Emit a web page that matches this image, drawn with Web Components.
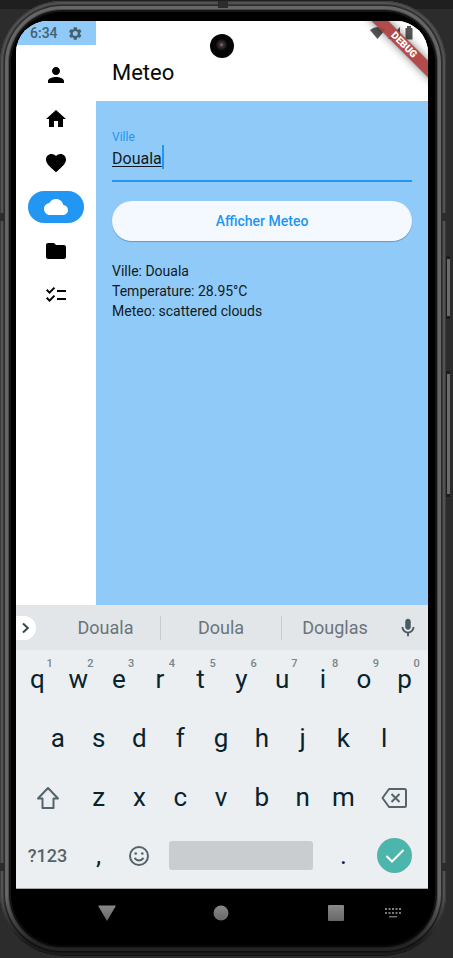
<!DOCTYPE html>
<html lang="fr">
<head>
<meta charset="utf-8">
<meta name="viewport" content="width=device-width, initial-scale=1">
<title>Meteo</title>
<style>
html{background:linear-gradient(#1f1f1f 0 9px,#2c2c2c 9px)}
body{margin:0;min-height:100vh;font-family:Roboto,"Liberation Sans",sans-serif;display:flow-root}
</style>
</head>
<body>
<phone-shell>
  <meteo-app>
    <side-rail slot="rail">
      <rail-item name="person" label="Profil"></rail-item>
      <rail-item name="home" label="Accueil"></rail-item>
      <rail-item name="heart" label="Favoris"></rail-item>
      <rail-item name="cloud" label="Meteo" selected></rail-item>
      <rail-item name="folder" label="Dossiers"></rail-item>
      <rail-item name="checklist" label="Liste"></rail-item>
    </side-rail>
    <span slot="title">Meteo</span>
    <meteo-form city="Douala" temperature="28.95°C" sky="scattered clouds"></meteo-form>
  </meteo-app>
  <suggestion-bar words="Douala,Doula,Douglas"></suggestion-bar>
  <soft-keyboard></soft-keyboard>
  <system-nav></system-nav>
</phone-shell>

<script>
const RESET = `<style>
*{box-sizing:border-box}
button,input{font:inherit;color:inherit;background:none;border:0;padding:0;margin:0;border-radius:0;outline:0}
button{display:grid;place-items:center;cursor:pointer}
svg{display:block}
</style>`;

function define(name, render) {
  customElements.define(name, class extends HTMLElement {
    connectedCallback() {
      if (this.shadowRoot) return;
      this.attachShadow({ mode: 'open' }).innerHTML = RESET + render(this);
    }
  });
}

define('phone-shell', () => `<style>
:host{position:relative;display:flex;flex-direction:column;box-sizing:border-box;min-height:calc(100vh - 3px);margin:1px 7px 2px 0;padding:20px 18px;border-radius:62px;background:#000;
 box-shadow:inset 0 0 0 1px #3d3d3d,inset 0 0 0 3px #525252,inset 0 0 0 4px #3a3a3a,inset 0 0 0 5px #2a2a2a,inset 0 0 0 8px #666,inset 0 0 0 9px #4a4a4a,inset 0 0 0 11px #141414}
:host{padding-left:16px}
.shade{position:absolute;inset:0;border-radius:62px;background:linear-gradient(transparent calc(100% - 60px),rgba(0,0,0,.65) calc(100% - 12px));pointer-events:none}
.screen{flex:1;display:flex;flex-direction:column;position:relative;overflow:hidden;border-radius:32px 32px 48px 48px;background:#000}
.camera{position:absolute;z-index:3;top:13px;left:50%;width:24px;height:24px;margin-left:-12px;border-radius:50%;background:radial-gradient(circle at 48% 45%,#716157 0 1px,#3a3432 2px,#241f24 4px,#050505 6px)}
.side{position:absolute;left:100%;width:4px;border:solid #1c1c1c;border-width:3px 0 3px 1px;background:#6a6a6a}
.power{top:255px;height:63px}.volume{top:370px;height:126px}
.band{position:absolute;background:#2c2c2c}
.b1,.b2{left:0;width:4px;height:8px}.b3,.b4{right:0;width:5px;height:8px}
.b1,.b3{top:212px}.b2,.b4{bottom:85px}.b5{top:0;left:218px;width:10px;height:7px}
</style>
<div class="screen"><div class="camera"></div><slot></slot></div>
<i class="side power"></i><i class="side volume"></i>
<i class="band b1"></i><i class="band b2"></i><i class="band b3"></i><i class="band b4"></i><i class="band b5"></i>
<i class="shade"></i>`);

define('meteo-app', () => `<style>
:host{position:relative;flex:1;display:grid;grid-template-columns:80px 1fr;background:#fff;overflow:hidden}
status-bar{position:absolute;z-index:1;inset:0 0 auto 0}
main{display:flex;flex-direction:column;background:#90caf9}
header{height:80px;padding:24px 16px 0;background:#fff;display:flex;align-items:center}
h1{margin:0;font-size:22px;line-height:28px;font-weight:400;color:#080808}
.debug{position:absolute;z-index:2;top:18px;right:-21px;width:90px;height:12px;transform:rotate(45deg);background:rgba(172,62,62,.93);box-shadow:0 0 8px rgba(0,0,0,.5);color:#fff;font-size:10px;line-height:12px;font-weight:900;text-align:center}
</style>
<status-bar></status-bar>
<slot name="rail"></slot>
<main><header><h1><slot name="title"></slot></h1></header><slot></slot></main>
<div class="debug">DEBUG</div>`);

define('status-bar', () => `<style>
:host{display:flex;align-items:center;height:24px;padding:0 14px;color:#45606f;font-size:14px;font-weight:500}
.gear{margin-left:10px}.space{flex:1}.right{display:flex;align-items:center;gap:3px;color:#555}
</style>
<span>6:34</span>
<svg class="gear" width="15" height="15" viewBox="0 0 24 24" fill="currentColor"><path d="M19.1 13c0-.3.1-.6.1-1s0-.7-.1-1l2.1-1.6c.2-.2.2-.4.1-.7l-2-3.4c-.1-.2-.4-.3-.6-.2l-2.5 1c-.5-.4-1.1-.7-1.7-1L14.100 2.400c0-.2-.2-.4-.5-.4h-4c-.2 0-.4.2-.5.400L8.700 5.100c-.6.3-1.200.6-1.700 1l-2.500-1c-.2-.1-.5 0-.6.200l-2 3.400c-.1.2-.1.5.1.7L4.100 11c0 .3-.1.7-.1 1s0 .7.1 1L2 14.600c-.2.2-.2.4-.1.700l2 3.400c.1.2.4.3.6.2l2.500-1c.5.4 1.100.7 1.700 1l.4 2.700c0 .2.2.4.5.4h4c.2 0 .4-.2.5-.4l.4-2.700c.6-.3 1.200-.6 1.700-1l2.500 1c.2.1.5 0 .6-.2l2-3.400c.1-.2.1-.5-.1-.7zM11.600 16a4 4 0 1 1 0-8 4 4 0 0 1 0 8z" fill-rule="evenodd"/></svg>
<span class="space"></span>
<span class="right">
<svg width="15" height="12" viewBox="0 0 15 12" fill="currentColor"><path d="M0 3Q7.500-3 15 3L7.500 12z"/></svg>
<svg width="13" height="12" viewBox="0 0 13 12" fill="currentColor"><path d="M0 12 12 0V12z"/></svg>
<svg width="10" height="14" viewBox="1 0 10 14" fill="currentColor"><path d="M4 0h4v2h1.500v11.500h-7V2H4z"/></svg>
</span>`);

define('side-rail', () => `<style>
:host{display:block;background:linear-gradient(#90caf9 0 24px,#fff 24px)}
nav{display:flex;flex-direction:column;align-items:center;gap:12px;padding:38px 0 16px}
</style><nav><slot></slot></nav>`);

const RAIL_ICONS = {
  person: 'M12 12c2.210 0 4-1.790 4-4s-1.790-4-4-4-4 1.790-4 4 1.790 4 4 4zm0 2c-2.670 0-8 1.340-8 4v2h16v-2c0-2.660-5.330-4-8-4z',
  home: 'M10 20v-6h4v6h5v-8h3L12 3 2 12h3v8z',
  heart: 'M12 21.350l-1.450-1.320C5.400 15.360 2 12.280 2 8.500 2 5.420 4.420 3 7.500 3c1.740 0 3.410.81 4.500 2.090C13.090 3.810 14.760 3 16.500 3 19.580 3 22 5.420 22 8.500c0 3.780-3.400 6.860-8.550 11.540z',
  cloud: 'M19.350 10.040C18.670 6.590 15.640 4 12 4 9.110 4 6.600 5.640 5.350 8.040 2.340 8.360 0 10.910 0 14c0 3.310 2.690 6 6 6h13c2.760 0 5-2.240 5-5 0-2.640-2.050-4.780-4.650-4.960z',
  folder: 'M10 4H4c-1.100 0-2 .9-2 2v12c0 1.100.9 2 2 2h16c1.100 0 2-.9 2-2V8c0-1.100-.9-2-2-2h-8z',
  checklist: 'M22 7h-9v2h9V7zm0 8h-9v2h9v-2zM5.540 11 2 7.460l1.410-1.410 2.120 2.120 4.240-4.240 1.410 1.410zM5.540 19 2 15.460l1.410-1.410 2.120 2.120 4.240-4.240 1.410 1.410z'
};
define('rail-item', el => `<style>
:host{display:block;color:#000}
:host([selected]){color:#fff}
button{width:56px;height:32px;border-radius:16px}
:host([selected]) button{background:#2196f3}
</style><button type="button" aria-label="${el.getAttribute('label')}"><svg width="24" height="24" viewBox="0 0 24 24" fill="currentColor"><path d="${RAIL_ICONS[el.getAttribute('name')]}"/></svg></button>`);

define('meteo-form', el => `<style>
:host{display:block;padding:28px 16px 16px;color:#121a20}
form{display:flex;flex-direction:column}
label{font-size:12px;line-height:16px;color:#2196f3}
.field{display:flex;height:37px;border-bottom:2px solid #2196f3;margin-bottom:19px}
input{height:26px;field-sizing:content;min-width:8px;font-size:16px;text-decoration:underline;text-decoration-thickness:1px;text-underline-offset:2px}
.caret{width:2px;height:24px;background:#2196f3}
button{height:40px;border-radius:20px;background:#f4f9ff;color:#2196f3;font-size:14px;font-weight:500;box-shadow:0 1px 1px rgba(0,0,0,.25)}
p{margin:0;font-size:14px;line-height:20px}
output{display:block;margin-top:20px}
</style>
<form onsubmit="return false">
<label for="city">Ville</label>
<div class="field"><input id="city" size="5" value="${el.getAttribute('city')}" spellcheck="false" autocomplete="off"><i class="caret"></i></div>
<button type="submit">Afficher Meteo</button>
<output for="city"><p>Ville: ${el.getAttribute('city')}</p><p>Temperature: ${el.getAttribute('temperature')}</p><p>Meteo: ${el.getAttribute('sky')}</p></output>
</form>`);

define('suggestion-bar', el => `<style>
:host{display:grid;grid-template-columns:35fr 109fr 121fr 107fr 40fr;align-items:center;height:45px;background:#e2e6e9;color:#6a757b;font-size:18px}
button{height:24px}
.word+.word{border-left:1px solid #c6cbce}
.more{width:20px;background:#fff;border-radius:0 12px 12px 0;color:#37474f}
.mic{color:#4b5b63}
</style>
<button class="more" type="button" aria-label="Plus"><svg width="20" height="20" viewBox="0 0 20 20" fill="none" stroke="currentColor" stroke-width="2"><path d="M7 5.500 11.800 10 7 14.500"/></svg></button>
${el.getAttribute('words').split(',').map(w => `<button class="word" type="button">${w}</button>`).join('')}
<button class="mic" type="button" aria-label="Micro"><svg width="22" height="22" viewBox="0 0 24 24" fill="currentColor"><path d="M12 14c1.700 0 3-1.300 3-3V5c0-1.700-1.300-3-3-3S9 3.300 9 5v6c0 1.700 1.300 3 3 3zm5-3c0 2.800-2.200 5-5 5s-5-2.200-5-5H5c0 3.500 2.600 6.400 6 6.900V21h2v-3.100c3.400-.5 6-3.400 6-6.900z"/></svg></button>`);

define('key-cap', el => `<style>
:host{display:grid;grid-column:span 2;position:relative;font-size:26px;color:#07232d}
:host([wide]){grid-column:span 3}
:host([first]){grid-column:2/span 2}
:host([space]){grid-column:span 8}
:host([small]){font-size:18px;color:#55646c;font-weight:500}
:host([icon]){color:#55646c}
button{padding-bottom:2px}
:host([icon]) button,:host([small]) button{padding:0}
sup{position:absolute;top:8px;left:calc(50% + 9px);font-size:11px;line-height:12px;font-weight:500;color:#7a858b}
</style><button type="button"${el.getAttribute('label') ? ` aria-label="${el.getAttribute('label')}"` : ''}><slot></slot></button>${el.getAttribute('hint') ? `<sup>${el.getAttribute('hint')}</sup>` : ''}`);

const caps = s => [...s].map(c => `<key-cap>${c}</key-cap>`).join('');
define('soft-keyboard', () => `<style>
:host{display:block;padding:0 3px 4px 1px;background:#ebeff2;border-bottom:1px solid #a5a8aa}
.row{display:grid;grid-template-columns:repeat(20,1fr);grid-auto-rows:59px}
.row:last-child{grid-auto-rows:57px}
.spacebar{width:144px;height:29px;border-radius:3px;background:#c9cdd0}
.enter{background:#4db6ac;border-radius:50%}
</style>
<div class="row">${[...'qwertyuiop'].map((c, i) => `<key-cap hint="${(i + 1) % 10}">${c}</key-cap>`).join('')}</div>
<div class="row"><key-cap first>a</key-cap>${caps('sdfghjkl')}</div>
<div class="row"><key-cap wide icon label="Majuscule"><svg width="24" height="24" viewBox="0 0 24 24" fill="none" stroke="currentColor" stroke-width="2" stroke-linejoin="round"><path d="M12 2 2 12.500H6.500V22H17.500V12.500H22z"/></svg></key-cap>${caps('zxcvbnm')}<key-cap wide icon label="Effacer"><svg width="26" height="22" viewBox="0 0 26 22" fill="none" stroke="currentColor" stroke-width="2" stroke-linejoin="round"><path d="M8 2H23.500Q25 2 25 3.500V18.500Q25 20 23.500 20H8L1.500 11z"/><path d="m10.500 7 8 8m0-8-8 8"/></svg></key-cap></div>
<div class="row"><key-cap wide small>?123</key-cap><key-cap>,</key-cap><key-cap icon label="Emoji"><svg width="22" height="22" viewBox="0 0 22 22" fill="none" stroke="currentColor" stroke-width="2"><circle cx="11" cy="11" r="9"/><path d="M6.500 13Q11 18 15.500 13"/><circle cx="7.700" cy="8.500" r="1.300" fill="currentColor" stroke="none"/><circle cx="14.300" cy="8.500" r="1.300" fill="currentColor" stroke="none"/></svg></key-cap><key-cap space icon label="Espace"><div class="spacebar"></div></key-cap><key-cap>.</key-cap><key-cap wide icon label="Valider"><svg class="enter" width="35" height="35" viewBox="0 0 35 35" fill="none" stroke="#fff" stroke-width="2"><path d="m9.500 18 5.500 5.500L26.500 12"/></svg></key-cap></div>`);

define('system-nav', () => `<style>
:host{display:grid;grid-template-columns:34fr 114fr 114fr 29fr 57fr 58fr 6fr;height:47px;background:#000;color:#9c9c9c}
.back{grid-column:2}.recent{grid-column:5}
</style>
<button class="back" type="button" aria-label="Retour"><svg width="18" height="16" viewBox="0 0 18 16" fill="currentColor"><path d="M1 .5H17Q18 .5 17.500 1.500L9 16 .5 1.500Q0 .5 1 .5z"/></svg></button>
<button type="button" aria-label="Accueil"><svg width="16" height="16" viewBox="0 0 16 16" fill="currentColor"><circle cx="8" cy="8" r="7.500"/></svg></button>
<button class="recent" type="button" aria-label="Applications"><svg width="16" height="16" viewBox="0 0 16 16" fill="currentColor"><rect width="16" height="16" rx="1"/></svg></button>
<button type="button" aria-label="Clavier"><svg width="16" height="10" viewBox="0 0 16 10" fill="currentColor"><path d="M0 0h2v2H0zM3.500 0h2v2h-2zM7 0h2v2H7zM10.500 0h2v2h-2zM14 0h2v2h-2zM0 4h2v2H0zM3.500 4h2v2h-2zM7 4h2v2H7zM10.500 4h2v2h-2zM14 4h2v2h-2zM4 8h8v1.500H4z"/></svg></button>`);
</script>
</body>
</html>
